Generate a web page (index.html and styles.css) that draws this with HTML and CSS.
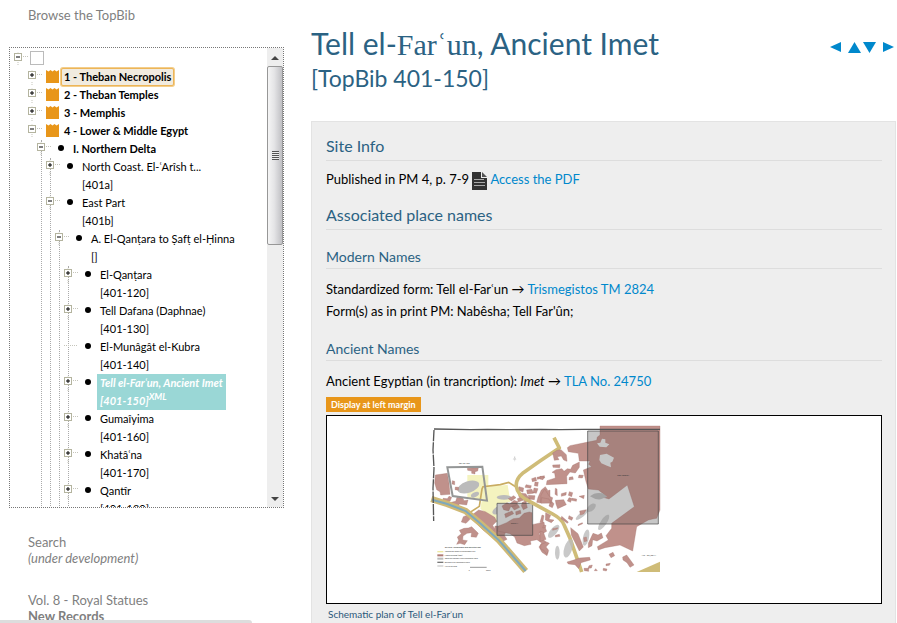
FILE: index.html
```html
<!DOCTYPE html>
<html lang="en">
<head>
    <meta charset="UTF-8">
    <meta name="viewport" content="width=device-width, initial-scale=1.0">
    <title>Tell el-Farʿun, Ancient Imet - TopBib</title>
    <link rel="stylesheet" href="styles.css">
</head>
<body>
    <!-- shared tree symbols -->
    <svg class="symbols" aria-hidden="true">
        <symbol id="plus" viewBox="0 0 15 15">
            <path d="M4 .5v1M4 12v3M9 4.500h5" stroke="#c5c5bb" stroke-dasharray="1 1" fill="none"/>
            <rect x=".5" y="1.500" width="7" height="7" fill="#fff" stroke="#b4b49f"/>
            <path d="M2 5h4M4 3v4" stroke="#000"/>
        </symbol>
        <symbol id="minus" viewBox="0 0 15 15">
            <path d="M4 .5v1M4 10v3M9 4.500h5" stroke="#c5c5bb" stroke-dasharray="1 1" fill="none"/>
            <rect x=".5" y="1.500" width="7" height="7" fill="#fff" stroke="#b4b49f"/>
            <path d="M2 5h4" stroke="#000"/>
        </symbol>
        <symbol id="leaf" viewBox="0 0 15 15">
            <path d="M0 5.500h14" stroke="#c5c5bb" stroke-dasharray="1 1" fill="none"/>
        </symbol>
        <symbol id="volume" viewBox="0 0 13 13">
            <path d="M0 0l2.500 1.500L4.500 0l2 1.500 2-1.500 2 1.500L13 0v13H0z" fill="#e8961a"/>
        </symbol>
    </svg>

    <div class="page">
        <aside class="sidebar">
            <p class="side-title">Browse the TopBib</p>

            <div class="tree">
                <div class="tree-view">
                    <div class="root">
                        <button class="toggle" aria-label="Collapse all"><svg><use href="#minus"/></svg></button>
                        <span class="root-box"></span>
                    </div>
                    <ul class="volumes">
                        <li>
                            <div class="node"><button class="toggle" aria-label="Expand"><svg><use href="#plus"/></svg></button><svg class="volume"><use href="#volume"/></svg><a class="label hover" href="#">1 - Theban Necropolis</a></div>
                        </li>
                        <li>
                            <div class="node"><button class="toggle" aria-label="Expand"><svg><use href="#plus"/></svg></button><svg class="volume"><use href="#volume"/></svg><a class="label" href="#">2 - Theban Temples</a></div>
                        </li>
                        <li>
                            <div class="node"><button class="toggle" aria-label="Expand"><svg><use href="#plus"/></svg></button><svg class="volume"><use href="#volume"/></svg><a class="label" href="#">3 - Memphis</a></div>
                        </li>
                        <li>
                            <div class="node"><button class="toggle" aria-label="Collapse"><svg><use href="#minus"/></svg></button><svg class="volume"><use href="#volume"/></svg><a class="label" href="#">4 - Lower &amp; Middle Egypt</a></div>
                            <ul class="branch">
                                <li>
                                    <div class="node"><button class="toggle" aria-label="Collapse"><svg><use href="#minus"/></svg></button><span class="bullet"></span><a class="label" href="#">I. Northern Delta</a></div>
                                    <ul class="branch places">
                                        <li>
                                            <div class="node"><button class="toggle" aria-label="Expand"><svg><use href="#plus"/></svg></button><span class="bullet"></span><a class="label" href="#">North Coast. El-ʿArîsh t...<br>[401a]</a></div>
                                        </li>
                                        <li>
                                            <div class="node"><button class="toggle" aria-label="Collapse"><svg><use href="#minus"/></svg></button><span class="bullet"></span><a class="label" href="#">East Part<br>[401b]</a></div>
                                            <ul class="branch">
                                                <li>
                                                    <div class="node"><button class="toggle" aria-label="Collapse"><svg><use href="#minus"/></svg></button><span class="bullet"></span><a class="label" href="#">A. El-Qanṭara to Ṣafṭ el-Ḥinna<br>[]</a></div>
                                                    <ul class="branch">
                                                        <li>
                                                            <div class="node"><button class="toggle" aria-label="Expand"><svg><use href="#plus"/></svg></button><span class="bullet"></span><a class="label" href="#">El-Qanṭara<br>[401-120]</a></div>
                                                        </li>
                                                        <li>
                                                            <div class="node"><button class="toggle" aria-label="Expand"><svg><use href="#plus"/></svg></button><span class="bullet"></span><a class="label" href="#">Tell Dafana (Daphnae)<br>[401-130]</a></div>
                                                        </li>
                                                        <li>
                                                            <div class="node"><span class="toggle"><svg><use href="#leaf"/></svg></span><span class="bullet"></span><a class="label" href="#">El-Munâgât el-Kubra<br>[401-140]</a></div>
                                                        </li>
                                                        <li>
                                                            <div class="node"><button class="toggle" aria-label="Expand"><svg><use href="#plus"/></svg></button><span class="bullet"></span><a class="label current" href="#">Tell el-Farʿun, Ancient Imet<br>[401-150]<sup>XML</sup></a></div>
                                                        </li>
                                                        <li>
                                                            <div class="node"><button class="toggle" aria-label="Expand"><svg><use href="#plus"/></svg></button><span class="bullet"></span><a class="label" href="#">Gumaîyima<br>[401-160]</a></div>
                                                        </li>
                                                        <li>
                                                            <div class="node"><button class="toggle" aria-label="Expand"><svg><use href="#plus"/></svg></button><span class="bullet"></span><a class="label" href="#">Khatâʿna<br>[401-170]</a></div>
                                                        </li>
                                                        <li>
                                                            <div class="node"><button class="toggle" aria-label="Expand"><svg><use href="#plus"/></svg></button><span class="bullet"></span><a class="label" href="#">Qantîr<br>[401-180]</a></div>
                                                        </li>
                                                    </ul>
                                                </li>
                                            </ul>
                                        </li>
                                    </ul>
                                </li>
                            </ul>
                        </li>
                    </ul>
                </div>
                <div class="scrollbar">
                    <button class="scroll-btn" aria-label="Scroll up"><svg viewBox="0 0 8 4"><path d="M0 4l4-4 4 4z" fill="#444"/></svg></button>
                    <div class="thumb"><span class="grip"></span></div>
                    <button class="scroll-btn scroll-down" aria-label="Scroll down"><svg viewBox="0 0 8 4"><path d="M0 0h8L4 4z" fill="#444"/></svg></button>
                </div>
            </div>

            <p class="side-block">Search<br><em>(under development)</em></p>
            <p class="side-block">Vol. 8 - Royal Statues<br><strong>New Records</strong></p>
        </aside>

        <main>
            <header>
                <h1>Tell el-<span class="translit">Farʿun</span>, Ancient Imet
                    <small>[TopBib 401-150]</small>
                </h1>
                <nav class="pager">
                    <a href="#" aria-label="Previous"><svg width="11" height="10" viewBox="0 0 11 10"><path d="M11 0v10L0 5z"/></svg></a>
                    <a class="up" href="#" aria-label="Up"><svg width="13" height="11" viewBox="0 0 13 11"><path d="M0 11h13L6.500 0z"/></svg></a>
                    <a class="down" href="#" aria-label="Down"><svg width="13" height="11" viewBox="0 0 13 11"><path d="M0 0h13L6.500 11z"/></svg></a>
                    <a href="#" aria-label="Next"><svg width="11" height="10" viewBox="0 0 11 10"><path d="M0 0v10l11-5z"/></svg></a>
                </nav>
            </header>

            <section class="well">
                <h2>Site Info</h2>
                <p class="published">Published in PM 4, p. 7-9
                    <svg class="doc" viewBox="0 0 15 18"><path d="M0 0h9v6h6v12H0z" fill="#333"/><path d="M10 0l5 5h-5z" fill="#555"/><path d="M2 7.500h10M2 10.500h11M2 13.500h11" stroke="#aaa" stroke-width="1.200"/></svg>
                    <a href="#">Access the PDF</a></p>

                <h2>Associated place names</h2>

                <h3>Modern Names</h3>
                <p>Standardized form: Tell el-Farʿun → <a href="#">Trismegistos TM 2824</a></p>
                <p>Form(s) as in print PM: Nabêsha; Tell Far'ûn;</p>

                <h3>Ancient Names</h3>
                <p>Ancient Egyptian (in trancription): <em>Imet</em> → <a href="#">TLA No. 24750</a></p>

                <button class="badge">Display at left margin</button>
                <figure>
                    <div class="plan">
                        <svg viewBox="0 0 696 450" role="img" aria-label="Schematic plan of Tell el-Farʿun">
                            <!-- west side: temenos and town -->
                            <g transform="translate(-360 -102)">
                                <path d="M472 255h63v34l58-4 8 50-42 10 2 53-50-42 5-28-44-4z" fill="#f4f3bf"/>
                                <g fill="#bbb">
                                    <ellipse cx="475" cy="291" rx="34" ry="17" transform="rotate(-18 475 291)"/>
                                    <ellipse cx="495" cy="314" rx="13" ry="7" transform="rotate(-25 495 314)"/>
                                    <ellipse cx="582" cy="322" rx="22" ry="7"/>
                                    <ellipse cx="567" cy="359" rx="22" ry="11" transform="rotate(-30 567 359)"/>
                                    <ellipse cx="582" cy="388" rx="9" ry="20" transform="rotate(20 582 388)"/>
                                </g>
                                <path d="M561 340h107v96H561z" fill="#e8e8e8"/>
                                <g fill="#c0918b" stroke="#a4716b">
                                    <path d="M376 255l36-5 5 30 3 33-28 2-2-10-10-6-6-20z"/>
                                    <path d="M472 235l33-2-2 10-8 2v7l-10-2v-7l-12-2z"/>
                                    <path d="M427 272l7 2v10l-8-2zM436 291l10 1-1 9-10-2zM399 325l13 1 5-7 8 3-5 12-20 2zM423 337l14-3 4-12 18 3 3 7 12-2-4 15-22-3-4 8-14-3z"/>
                                    <path d="M486 375l20-15 20 5 28 17 6 12-12 12 7 13-14 18-22-17-25-25z"/>
                                    <path d="M460 380l16-6 4 14-12 12-14-4zM475 414l10-4 20 20-6 12-16-2 2-12-14 2-12 8-1 12 14 2-8 12-14-4-10 3 6-12-4-10 12-10-6-10 14-6z"/>
                                    <path d="M550 436l5-28 22 1 10 17-4 10 8 12-12 6-16-8z"/>
                                    <path d="M566 408l24-10 20-12 18-2 14-14 16-4 8 2v36l28-6 8-2 2 12 6 16-14 8-10-3 10 18 12 8-3 18 10 12-4 12-15-10-9-16 8-12-14-10-20 4 2 10-20 4-22-8-7-18-14-10-38-8z"/>
                                    <path d="M576 348l15-10 8 5 13-12 12 4-7 13-15 2-6 13-15-4zM595 326l16-9 7 6-14 10zM622 326l14-6 3 11-14 5zM605 350l17-8 7 10-16 8zM637 337l10-4 5 20-12 6-6-12zM584 372l22-9 5 8-24 12zM617 365l14-4 2 9-15 5z"/>
                                    <path d="M627 290l14 4-2 12-17-5zM648 284l16 3-2 8-17-3zM665 266l12-4 3 10-13 3zM681 262l22-5 1 7-22 4zM675 276l10 1-2 12-10-2zM650 300l16-2 4 12-18 2zM672 294l12 2-5 14-10-2zM625 308l22 3 14 18-12 8-22-16zM655 316l20 1-2 12-16-2zM684 322l10-22 12-10 8 12 6-2v34l-20-3-8 8-12-2z"/>
                                </g>
                                <path d="M480 367l28-18 8-52 3-7 52-6 25-7 22 14" fill="none" stroke="#c9ac62" stroke-width="5"/>
                                <path d="M412 232l105-2 14 102-103-14z" fill="none" stroke="#949696" stroke-width="6"/>
                                <path d="M364 327l48 15 55 21 45 38 55 50 80 92" fill="none" stroke="#cfb975" stroke-width="19"/>
                                <path d="M366 329l46 13 55 21 45 38 55 50 80 92" fill="none" stroke="#7da9bd" stroke-width="6"/>
                                <path d="M561 340h107v96H561z" fill="#444" fill-opacity=".22" stroke="#444" stroke-width="2"/>
                                <path d="M614 198v16M610 208l4-6 4 6z" fill="none" stroke="#aaa"/>
                            </g>

                            <!-- road -->
                            <path d="M372 41L388 72 330 111 280 146Q256 166 259 187Q262 215 300 233L368 270Q394 284 402 302L420 343 440 400 455 444" fill="none" stroke="#cfbc78" stroke-width="11" stroke-linejoin="round"/>

                            <!-- north east: cemetery -->
                            <g transform="translate(330 -27)">
                                <path d="M143 48h212v279H143z" fill="#e8e8e8"/>
                                <path d="M180 33H360V285L350 310 338 312 325 315 290 335 278 408 240 390 195 398 175 405 172 395 205 375 198 362 215 340 215 325 283 275 262 210 207 252 186 246 190 236 175 225 145 222 138 200 130 165 155 155 146 148 150 138 118 138 115 115 85 110 82 98 90 92 140 82 170 76 172 66 180 60z" fill="#c0918b" stroke="#a4716b"/>
                                <path d="M171 85l10-2 5-12 10 2v10l12 5-9 9-20-2zM180 120l20-4 22 12-5 12-6 3 2 14-12-5-17-7-6-10z" fill="#e8e8e8"/>
                                <path d="M150 244q15-14 38-9l14 10-20 8q-16 2-32-9z" fill="#bbb"/>
                                <g fill="#c0918b" stroke="#a4716b">
                                    <path d="M38 114l13-8 12-2 16 15 2 20-10-4-7-12-12 2 5 9-14 2zM38 150l22-1-1 9-20-1zM48 164l18-3 6 8 10-8 10 2 6-12 20-10v16l-12 17-16-3-10 13 1 22-62 3 2-12 25-8-2-14-8-3zM0 184l12 2-3 8-9-2zM117 180l13 1-3 8-12-1zM88 187l10-2 2 8-13 2zM14 222l14 22 10 4-4 16-33-2 2-22zM46 220l5 2 1 20-7-4zM64 236l15-4-1 8-14 4zM88 230l10 3-3 12-10-4zM96 250l14 2-1 7-15-3zM32 256l10 10-5 12-10-5zM117 244l16-3-2 10z"/>
                                </g>
                            </g>

                            <!-- south east -->
                            <g transform="translate(330 213)">
                                <g fill="#bbb" fill-opacity=".8">
                                    <ellipse cx="125" cy="60" rx="22" ry="7" transform="rotate(-38 125 60)"/>
                                    <ellipse cx="154" cy="38" rx="16" ry="9" transform="rotate(-42 154 38)"/>
                                    <ellipse cx="191" cy="82" rx="27" ry="9" transform="rotate(-56 191 82)"/>
                                    <ellipse cx="41" cy="109" rx="24" ry="10" transform="rotate(-50 41 109)"/>
                                    <ellipse cx="52" cy="173" rx="7" ry="21"/>
                                    <ellipse cx="85" cy="160" rx="12" ry="29" transform="rotate(18 85 160)"/>
                                    <ellipse cx="138" cy="128" rx="9" ry="25" transform="rotate(12 138 128)"/>
                                </g>
                                <g fill="#c0918b" stroke="#a4716b">
                                    <path d="M5 8l22 4 6 12-30 1zM46 16l25-2 8 15-26 12-5-14zM87 8l8 2-3 12-10-4zM17 53l15 8-5 12 15 2-8 8-18-8zM65 64l20 17-3 4-19-14zM87 62l12 6-4 8-10-5zM115 88l12-5 1 3-14 6zM119 48l20-4-8 13-10 3zM6 60l6 2-4 22-8-2zM38 101l15-3-1 4-14 4zM0 108l10 3 8 22-18 6zM2 149l18-8 8 4-10 11 8 10-6 12-8-12-10-4zM10 92l8-1-2 7-8 1zM46 121l12-3 2 6-14 2z"/>
                                    <path d="M92 98l22 18 16 40-12 12-14-28-10-20zM131 128l8-2 2 12-8 2zM145 145l14-30 15 5 10-6 5 14-18 10-13-4-2 18-11 6zM207 178l12-6 5 10-11 6zM248 186l12-6 22 30-12 7-9-14-12-8zM81 201l18-5 20-7 30-2 2 8-28 8-7 18-11-12-20-2zM147 212l10-2-3 9-10 1zM132 220h14v9l-13-2zM198 207l13-2-3 6-10 1zM163 227l4-6 5 6zM190 220l11 2-2 6-10-2z"/>
                                </g>
                                <path d="M290 231l70-31v31z" fill="#cfbc78"/>
                            </g>

                            <path d="M473 21h212v279H473z" fill="#444" fill-opacity=".2" stroke="#444" stroke-width="2"/>

                            <!-- frame -->
                            <path d="M12 18l-3 60 3 55-3 60 2 98" fill="none" stroke="#555" stroke-width="4" stroke-dasharray="34 3"/>
                            <path d="M12 15l110 2 50-1 60 1 100-1 60 1 70-1h228" fill="none" stroke="#555" stroke-width="4"/>

                            <g class="map-text">
                                <text x="86" y="121">TEMENOS</text>
                                <text x="242" y="301">TOWN</text>
                                <text x="562" y="157">CEMETERY</text>
                                <text x="635" y="396">HR - 07/2014</text>
                            </g>
                            <g class="map-legend">
                                <text class="legend-title" x="44" y="373">Tell Far'un - archaeological areas and Petrie's plan</text>
                                <text x="44" y="385">Approximate extent of archaeological area</text>
                                <text x="44" y="396">Modern buildings (2002)</text>
                                <text x="44" y="406">Tombs and cemetery areas according to Petrie</text>
                                <text x="44" y="417">Enclosure walls according to Petrie</text>
                                <text x="44" y="428">Hills on old maps</text>
                                <text x="116" y="440">0</text>
                                <text x="168" y="440">500 m</text>
                            </g>
                            <path d="M22 383h18" stroke="#eee9a0" stroke-width="4"/>
                            <path d="M22 394h18" stroke="#b07c75" stroke-width="6"/>
                            <path d="M22 404h18" stroke="#bbb" stroke-width="6"/>
                            <path d="M22 415h18" stroke="#777" stroke-width="4"/>
                            <path d="M22 426h18" stroke="#ccc" stroke-width="4"/>
                            <path d="M120 430h50" stroke="#666" stroke-width="2"/>
                        </svg>
                    </div>
                    <figcaption>Schematic plan of Tell el-Farʿun</figcaption>
                </figure>
            </section>
        </main>
    </div>
    <div class="status-bar"></div>
</body>
</html>
```

FILE: styles.css
```css
* {
    margin: 0;
    padding: 0;
    box-sizing: border-box;
}

body {
    font-family: Lato, 'Noto Sans', sans-serif;
    font-size: 13px;
    line-height: 22px;
    color: #000;
    background: #fff;
    height: 100vh;
    overflow: hidden;
}

a {
    color: #08c;
    text-decoration: none;
}

button {
    font: inherit;
    border: none;
    background: none;
    cursor: pointer;
}

.symbols {
    position: absolute;
    width: 0;
    height: 0;
}

.page {
    display: flex;
    min-height: 100vh;
}

/* sidebar */
.sidebar {
    flex: 0 0 311px;
    padding: 7px 27px 0 9px;
    color: #7f7f7f;
    line-height: 16px;
}

.side-title {
    padding-left: 19px;
    margin-bottom: 24px;
}

.side-block {
    padding-left: 19px;
    margin-top: 26px;
}

.tree {
    display: flex;
    height: 461px;
    border: 1px dotted #777;
    overflow: hidden;
}

.tree-view {
    flex: 1;
    min-width: 0;
    overflow: hidden;
    font-size: 11px;
    line-height: 18px;
}

.tree ul {
    list-style: none;
}

.root {
    display: flex;
    height: 20px;
    padding: 3px 0 0 4px;
}

.root .toggle {
    margin-top: 1px;
}

.root-box {
    width: 14px;
    height: 14px;
    margin-left: 1px;
    border: 1px solid #bbb;
}

.volumes {
    padding-left: 18px;
    font-weight: bold;
}

.branch {
    margin-left: 13px;
    border-left: 1px dotted #aaa;
}

.branch .node {
    margin-left: -5px;
}

.branch .branch {
    margin-left: 8px;
}

.places {
    font-weight: normal;
}

.node {
    display: flex;
    align-items: flex-start;
}

.toggle {
    flex: none;
    width: 15px;
    height: 15px;
    margin-top: 2px;
}

.toggle svg {
    display: block;
    width: 15px;
    height: 15px;
}

.volume {
    flex: none;
    width: 13px;
    height: 13px;
    margin: 2px 2px 0 3px;
}

.bullet {
    flex: none;
    width: 6px;
    height: 6px;
    margin: 5px 6px 0;
    border-radius: 50%;
    background: #000;
}

.label {
    padding: 0 3px;
    color: #000;
    white-space: nowrap;
}

.label.hover {
    padding: 0 2px;
    line-height: 16px;
    border: 1px solid #edb558;
    border-radius: 2px;
    background: #f1ebdf;
    box-shadow: 0 0 0 1px #f3ce8c;
}

.label.current {
    background: #9ad7d6;
    color: #fff;
    font-style: italic;
    font-weight: bold;
}

.label sup {
    font-size: 9px;
    line-height: 0;
}

.scrollbar {
    flex: 0 0 16px;
    display: flex;
    flex-direction: column;
    background: #eee;
}

.scroll-btn {
    height: 18px;
    line-height: 0;
}

.scroll-btn svg {
    width: 8px;
    height: 4px;
}

.scroll-down {
    margin-top: auto;
}

.thumb {
    display: flex;
    align-items: center;
    justify-content: center;
    height: 179px;
    border: 1px solid #979797;
    border-radius: 2px;
    background: linear-gradient(90deg, #f5f5f5, #e4e4e6 45%, #c0c0c4);
}

.grip {
    width: 7px;
    height: 9px;
    background: repeating-linear-gradient(#555 0 1px, #eee 1px 2px);
}

/* main column */
main {
    flex: 1;
    min-width: 0;
    display: flex;
    flex-direction: column;
    padding: 25px 1px 0 0;
}

header {
    display: flex;
    justify-content: space-between;
    margin-bottom: 26px;
}

h1, h2, h3 {
    color: #2b6283;
    font-weight: normal;
}

h1 {
    font-size: 30px;
    line-height: 36px;
}

h1 small {
    display: block;
    font-size: 23px;
    line-height: 34px;
}

.translit {
    font-family: 'Liberation Serif', serif;
    line-height: 1;
}

.pager {
    display: flex;
    align-items: center;
    height: 44px;
    padding-right: 2px;
    line-height: 0;
    gap: 7px;
}

.pager .down {
    margin-left: -5px;
}

.pager path {
    fill: #08c;
}

.well {
    flex: 1;
    padding: 14px 13px 0 14px;
    border: 1px solid #e3e3e3;
    border-bottom: none;
    background: #eee;
}

h2 {
    font-size: 16px;
    line-height: 20px;
    padding-bottom: 4px;
    border-bottom: 1px solid #ddd;
    margin-bottom: 7px;
}

h3 {
    font-size: 14px;
    line-height: 18px;
    padding-bottom: 2px;
    border-bottom: 1px solid #ddd;
    margin: 18px 0 9px;
}

.published {
    margin-bottom: 15px;
}

.doc {
    width: 15px;
    height: 18px;
    vertical-align: middle;
}

.badge {
    display: block;
    margin: 5px 0 3px;
    padding: 0 5px;
    background: #e8961a;
    color: #fff;
    font-size: 9px;
    font-weight: bold;
    line-height: 15px;
}

.plan {
    padding: 8px 8px 29px 103px;
    border: 1px solid #000;
    background: #fff;
}

.plan svg {
    display: block;
    width: 232px;
    height: 150px;
}

.map-text {
    font-size: 7px;
    fill: #333;
}

.map-legend {
    font-size: 5px;
    fill: #333;
}

.map-legend .legend-title {
    font-weight: bold;
}

figcaption {
    padding-left: 2px;
    color: #2b587a;
    font-size: 10px;
    line-height: 20px;
}

.status-bar {
    position: fixed;
    left: 0;
    bottom: 0;
    width: 252px;
    height: 3px;
    border-radius: 0 3px 0 0;
    background: #ddd;
}
```
